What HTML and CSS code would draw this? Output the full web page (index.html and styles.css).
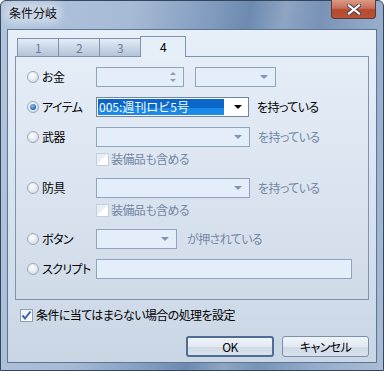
FILE: index.html
```html
<!DOCTYPE html>
<html lang="ja">

<head>
    <meta charset="UTF-8">
    <title>条件分岐</title>
    <link rel="stylesheet" href="styles.css">
</head>

<body>
    <div class="window">
        <div class="titlebar">
            <span class="title">条件分岐</span>
            <span class="close">
                <svg width="14" height="11" viewBox="0 0 14 11">
                    <path d="M2 1.5 L12 9.5 M12 1.5 L2 9.5" stroke="#3b3f4a" stroke-width="4" stroke-linecap="square" fill="none"/>
                    <path d="M2 1.5 L12 9.5 M12 1.5 L2 9.5" stroke="#ffffff" stroke-width="2.2" stroke-linecap="square" fill="none"/>
                </svg>
            </span>
        </div>

        <div class="client">
            <div class="tabs">
                <div class="tab">1</div>
                <div class="tab">2</div>
                <div class="tab">3</div>
                <div class="tab active">4</div>
            </div>

            <div class="panel">
                <div class="row">
                    <label class="opt"><span class="radio"></span>お金</label>
                    <div class="field spin w88">
                        <span class="spin-arrows"><i class="up"></i><i class="down"></i></span>
                    </div>
                    <div class="field combo w81 ml11"><i class="arrow"></i></div>
                </div>

                <div class="row">
                    <label class="opt"><span class="radio checked"></span>アイテム</label>
                    <div class="field combo on w153">
                        <span class="sel">005:週刊ロビ5号</span>
                        <i class="arrow"></i>
                    </div>
                    <span class="after">を持っている</span>
                </div>

                <div class="row">
                    <label class="opt"><span class="radio"></span>武器</label>
                    <div class="field combo w154"><i class="arrow"></i></div>
                    <span class="after off">を持っている</span>
                </div>
                <div class="sub">
                    <span class="check off"></span><span class="off">装備品も含める</span>
                </div>

                <div class="row">
                    <label class="opt"><span class="radio"></span>防具</label>
                    <div class="field combo w154"><i class="arrow"></i></div>
                    <span class="after off">を持っている</span>
                </div>
                <div class="sub">
                    <span class="check off"></span><span class="off">装備品も含める</span>
                </div>

                <div class="row">
                    <label class="opt"><span class="radio"></span>ボタン</label>
                    <div class="field combo w81"><i class="arrow"></i></div>
                    <span class="after off ml10">が押されている</span>
                </div>

                <div class="row">
                    <label class="opt"><span class="radio"></span>スクリプト</label>
                    <div class="field w256"></div>
                </div>
            </div>

            <div class="footer-check">
                <span class="check checked">
                    <svg width="11" height="11" viewBox="0 0 11 11">
                        <path d="M1.5 5.5 L4 8.5 L9.5 1.5" stroke="#3a62b0" stroke-width="2" fill="none"/>
                    </svg>
                </span>
                <span>条件に当てはまらない場合の処理を設定</span>
            </div>

            <div class="buttons">
                <button class="btn default">OK</button>
                <button class="btn">キャンセル</button>
            </div>
        </div>
    </div>
</body>

</html>
```

FILE: styles.css
```css
* {
    box-sizing: border-box;
}

body {
    margin: 0;
    width: 384px;
    height: 371px;
    overflow: hidden;
    font-family: "Noto Sans CJK JP", "Liberation Sans", sans-serif;
    font-size: 12px;
    line-height: 14px;
    letter-spacing: -0.6px;
    font-feature-settings: "palt";
    color: #000;
    background: #fff;
}

.window {
    width: 384px;
    height: 371px;
    display: flex;
    flex-direction: column;
    border: 1px solid #34465e;
    border-radius: 6px 6px 0 0;
    background: linear-gradient(100deg, #b3c5dc 0%, #a5bad4 30%, #7f9bbd 48%, #6c8ab0 56%, #8ea5c3 64%, #7893b6 72%, #97aecb 86%, #a9bcd4 100%);
}

.titlebar {
    height: 28px;
    display: flex;
    justify-content: space-between;
    align-items: flex-start;
    padding: 0 7px 0 7px;
}

.title {
    margin-top: 5px;
    padding: 0 1px;
    font-size: 12px;
    letter-spacing: 0;
    color: #111;
    background: rgba(220, 230, 242, 0.55);
    border-radius: 6px;
    box-shadow: 0 0 6px 4px rgba(220, 230, 242, 0.55);
}

.close {
    width: 45px;
    height: 19px;
    margin-top: -1px;
    display: flex;
    align-items: center;
    justify-content: center;
    border: 1px solid #5c3a36;
    border-top: none;
    border-radius: 0 0 4px 4px;
    background: linear-gradient(#dc9a86 0%, #c86f58 45%, #b44a30 55%, #b85236 100%);
}

.client {
    flex: 1;
    margin: 0 6px 7px 6px;
    border: 1px solid #5d7595;
    background: linear-gradient(#e7eff9 0%, #d6e1ee 60%, #cad6e4 100%);
    padding: 6px 0 0 0;
}

.tabs {
    display: flex;
    align-items: flex-end;
    height: 20px;
    padding-left: 9px;
    position: relative;
    z-index: 1;
}

.tab {
    width: 42px;
    height: 18px;
    margin-right: -1px;
    text-align: center;
    line-height: 17px;
    color: #697d98;
    border: 1px solid #7d93b0;
    border-bottom: none;
    background: linear-gradient(#e4ecf6 0%, #cbd7e6 50%, #b3c3d8 100%);
}

.tab.active {
    width: 46px;
    height: 21px;
    margin-bottom: -1px;
    line-height: 20px;
    color: #000;
    background: #e6eef8;
}

.panel {
    width: 354px;
    height: 244px;
    margin-left: 7px;
    border: 1px solid #7d93b0;
    background: linear-gradient(#e5edf7 0%, #d9e3ef 60%, #d0dbe8 100%);
    padding: 10px 0 0 11px;
    display: flex;
    flex-direction: column;
}

.row {
    display: flex;
    align-items: center;
    height: 20px;
    margin-bottom: 10px;
    white-space: nowrap;
}

.sub {
    display: flex;
    align-items: center;
    height: 14px;
    margin: -5px 0 12px 69px;
    white-space: nowrap;
}

.opt {
    width: 69px;
    flex: none;
    display: flex;
    align-items: center;
    white-space: nowrap;
}

.radio {
    width: 12px;
    height: 12px;
    flex: none;
    margin-right: 3px;
    border-radius: 50%;
    border: 1px solid #9aa8b9;
    background: radial-gradient(circle at 40% 35%, #ffffff 0%, #e4e8ee 55%, #c6cdd7 100%);
    display: flex;
    align-items: center;
    justify-content: center;
}

.radio.checked::after {
    content: "";
    width: 6px;
    height: 6px;
    border-radius: 50%;
    background: radial-gradient(circle at 40% 35%, #8fc2f2 0%, #2b6cc0 60%, #1b4f96 100%);
}

.field {
    height: 20px;
    flex: none;
    border: 1px solid #8fa3bd;
    background: #e4eefa;
    display: flex;
    align-items: center;
    justify-content: flex-end;
}

.w88 { width: 88px; }
.w81 { width: 81px; }
.w153 { width: 153px; }
.w154 { width: 154px; }
.w256 { width: 256px; }
.ml11 { margin-left: 11px; }
.ml10 { margin-left: 10px !important; }

.arrow {
    width: 0;
    height: 0;
    margin-right: 7px;
    border-left: 4px solid transparent;
    border-right: 4px solid transparent;
    border-top: 4px solid #8094b0;
}

.spin-arrows {
    display: flex;
    flex-direction: column;
    gap: 4px;
    margin-right: 7px;
}

.spin-arrows i {
    width: 0;
    height: 0;
    border-left: 3px solid transparent;
    border-right: 3px solid transparent;
}

.spin-arrows .up {
    border-bottom: 3px solid #8c9db4;
}

.spin-arrows .down {
    border-top: 3px solid #8c9db4;
}

.combo.on {
    background: #fff;
    border-color: #6f84a1;
    padding: 1px;
    justify-content: space-between;
}

.sel {
    flex: 1;
    height: 16px;
    padding-left: 1px;
    margin-right: 10px;
    font-feature-settings: normal;
    letter-spacing: 0;
    font-size: 12px;
    line-height: 16px;
    color: #fff;
    background: linear-gradient(#0a66c8 0%, #0a66c8 55%, #1a8ae6 55%, #1a8ae6 100%);
}

.combo.on .arrow {
    border-top: 4px solid #000;
    margin-right: 5px;
}

.after {
    margin-left: 8px;
}

.off {
    color: #7286a4;
}

.check {
    width: 13px;
    height: 13px;
    flex: none;
    margin-right: 2px;
    border: 1px solid #8e9db2;
    background: linear-gradient(135deg, #eef1f5 0%, #ffffff 100%);
    display: flex;
    align-items: center;
    justify-content: center;
}

.check.off {
    border-color: #c3cedb;
    background: linear-gradient(135deg, #e8eef6 0%, #e8eef6 50%, #ffffff 50%, #ffffff 100%);
}

.footer-check {
    display: flex;
    align-items: center;
    height: 16px;
    margin: 7px 0 0 12px;
}

.footer-check .check {
    margin-right: 3px;
}

.buttons {
    display: flex;
    justify-content: flex-end;
    gap: 8px;
    margin: 13px 7px 0 0;
}

.btn {
    width: 87px;
    height: 21px;
    padding: 0;
    font-family: "Noto Sans CJK JP", "Liberation Sans", sans-serif;
    font-size: 12px;
    line-height: 14px;
    letter-spacing: -0.6px;
    font-feature-settings: "palt";
    color: #000;
    border: 1px solid #7890ae;
    border-radius: 3px;
    background: linear-gradient(#f0f4f9 0%, #e2e9f2 50%, #cfd9e5 51%, #d8e1ec 100%);
}

.btn.default {
    width: 88px;
    border: 2px solid #4f6c92;
}
```
